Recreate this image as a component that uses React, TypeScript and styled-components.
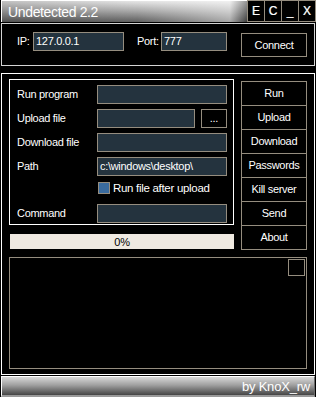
import React from "react";
import styled, { createGlobalStyle } from "styled-components";

const Global = createGlobalStyle`
  html, body { margin: 0; padding: 0; background: #000; }
  body {
    font-family: "Liberation Sans", Arial, sans-serif;
    font-size: 11px;
    letter-spacing: -0.3px;
    color: #fff;
  }
  * { box-sizing: border-box; }
`;

const frame = "#958d7f";
const field = "#24333e";

const Window = styled.div`
  width: 316px;
  height: 397px;
  background: #000;
  padding-left: 1px;
  display: flex;
  flex-direction: column;
  overflow: hidden;
`;

const TitleRow = styled.div`
  display: flex;
  height: 22px;
`;

const TitleBar = styled.div`
  width: 246px;
  height: 22px;
  border-top: 1px solid #fff;
  border-left: 1px solid #fff;
  background:
    linear-gradient(to right, rgba(0,0,0,0.15), rgba(0,0,0,0) 55%, rgba(255,255,255,0.45) 93%, rgba(0,0,0,0.35) 100%),
    linear-gradient(to bottom, #e6e6e6 0%, #acacac 45%, #5e5e5e 100%);
  padding-left: 6px;
  display: flex;
  align-items: center;
  font-size: 14px;
  letter-spacing: -0.35px;
  color: #fff;
`;

const TitleButtons = styled.div`
  display: flex;
`;

const TitleButton = styled.div`
  width: 18px;
  height: 22px;
  border: 1px solid ${frame};
  margin-left: -1px;
  &:first-child { margin-left: 0; }
  display: flex;
  align-items: center;
  justify-content: center;
  font-size: 12px;
  letter-spacing: 0;
  color: #fff;
  text-shadow: -0.5px 0 rgba(217, 160, 64, 0.55), 0.5px 0 rgba(74, 168, 255, 0.55);
`;

const TopPanel = styled.div`
  margin-top: 1px;
  width: 314px;
  height: 43px;
  border: 1px solid #d4d4d4;
  padding: 8px 0 0 15px;
  display: flex;
  align-items: flex-start;
`;

const Label = styled.span<{ $w: number; $ml?: number }>`
  width: ${(p) => p.$w}px;
  margin-left: ${(p) => p.$ml ?? 0}px;
  flex: none;
  line-height: 19px;
  white-space: nowrap;
`;

const Input = styled.div<{ $w: number }>`
  width: ${(p) => p.$w}px;
  height: 19px;
  flex: none;
  background: ${field};
  border: 1px solid ${frame};
  padding-left: 2px;
  line-height: 17px;
  white-space: nowrap;
  overflow: hidden;
`;

const FrameButton = styled.div<{ $w: number; $h: number; $ml?: number; $mt?: number }>`
  width: ${(p) => p.$w}px;
  height: ${(p) => p.$h}px;
  margin-left: ${(p) => p.$ml ?? 0}px;
  margin-top: ${(p) => p.$mt ?? 0}px;
  flex: none;
  border: 1px solid ${frame};
  background: #000;
  display: flex;
  align-items: center;
  justify-content: center;
  padding-bottom: 1px;
`;

const MainPanel = styled.div`
  margin-top: 7px;
  width: 314px;
  height: 302px;
  border: 1px solid #fff;
  padding: 5px 7px;
  display: flex;
  flex-direction: column;
`;

const Upper = styled.div`
  display: flex;
  gap: 7px;
`;

const LeftCol = styled.div`
  width: 225px;
  display: flex;
  flex-direction: column;
`;

const Group = styled.div`
  height: 146px;
  border: 1px solid #fff;
  padding: 5px 6px 1px 7px;
  display: flex;
  flex-direction: column;
  gap: 5px;
`;

const Row = styled.div`
  display: flex;
  align-items: flex-start;
  height: 19px;
`;

const CheckRow = styled.div`
  display: flex;
  align-items: flex-start;
  height: 18px;
  padding-left: 81px;
`;

const Check = styled.div`
  width: 12px;
  height: 12px;
  margin-top: 1px;
  background: #3a6b9e;
  border: 1px solid ${frame};
  flex: none;
`;

const CheckText = styled.span`
  margin-left: 3px;
  line-height: 14px;
  font-size: 11.5px;
`;

const Progress = styled.div`
  margin: 9px 0 0 1px;
  width: 224px;
  height: 15px;
  background: #efe9e1;
  color: #000;
  display: flex;
  align-items: center;
  justify-content: center;
  font-size: 11px;
`;

const SideCol = styled.div`
  width: 66px;
  margin-top: 2px;
  display: flex;
  flex-direction: column;
`;

const SideButton = styled.div`
  height: 25px;
  margin-top: -1px;
  &:first-child { margin-top: 0; }
  border: 1px solid ${frame};
  display: flex;
  align-items: center;
  justify-content: center;
  padding-bottom: 1px;
  white-space: nowrap;
`;

const LogBox = styled.div`
  margin-top: 7px;
  height: 112px;
  border: 1px solid ${frame};
  display: flex;
  justify-content: flex-end;
  align-items: flex-start;
  padding: 1px 1px 0 0;
`;

const LogToggle = styled.div`
  width: 17px;
  height: 17px;
  border: 1px solid ${frame};
`;

const StatusBar = styled.div`
  margin-top: 1px;
  width: 314px;
  height: 21px;
  border-top: 1px solid #fff;
  border-left: 1px solid #fff;
  border-right: 1px solid #6a6a6a;
  border-bottom: 2px solid #9a9a9a;
  background: linear-gradient(to bottom, #d8d8d8 0%, #a0a0a0 45%, #454545 100%);
  display: flex;
  align-items: center;
  justify-content: flex-end;
  padding-right: 4px;
  font-size: 13px;
  letter-spacing: -0.2px;
  color: #fff;
`;

const sideButtons = ["Run", "Upload", "Download", "Passwords", "Kill server", "Send", "About"];

export default function App() {
  return (
    <>
      <Global />
      <Window>
        <TitleRow>
          <TitleBar>Undetected 2.2</TitleBar>
          <TitleButtons>
            {["E", "C", "_", "X"].map((t) => (
              <TitleButton key={t}>{t}</TitleButton>
            ))}
          </TitleButtons>
        </TitleRow>

        <TopPanel>
          <Label $w={16}>IP:</Label>
          <Input $w={91}>127.0.0.1</Input>
          <Label $w={24} $ml={13}>Port:</Label>
          <Input $w={66}>777</Input>
          <FrameButton $w={66} $h={24} $ml={14} $mt={1}>Connect</FrameButton>
        </TopPanel>

        <MainPanel>
          <Upper>
            <LeftCol>
              <Group>
                <Row>
                  <Label $w={80}>Run program</Label>
                  <Input $w={130} />
                </Row>
                <Row>
                  <Label $w={80}>Upload file</Label>
                  <Input $w={98} />
                  <FrameButton $w={26} $h={19} $ml={6}>...</FrameButton>
                </Row>
                <Row>
                  <Label $w={80}>Download file</Label>
                  <Input $w={130} />
                </Row>
                <Row>
                  <Label $w={80}>Path</Label>
                  <Input $w={130}>c:\windows\desktop\</Input>
                </Row>
                <CheckRow>
                  <Check />
                  <CheckText>Run file after upload</CheckText>
                </CheckRow>
                <Row>
                  <Label $w={80}>Command</Label>
                  <Input $w={130} />
                </Row>
              </Group>
              <Progress>0%</Progress>
            </LeftCol>
            <SideCol>
              {sideButtons.map((b) => (
                <SideButton key={b}>{b}</SideButton>
              ))}
            </SideCol>
          </Upper>
          <LogBox>
            <LogToggle />
          </LogBox>
        </MainPanel>

        <StatusBar>by KnoX_rw</StatusBar>
      </Window>
    </>
  );
}
